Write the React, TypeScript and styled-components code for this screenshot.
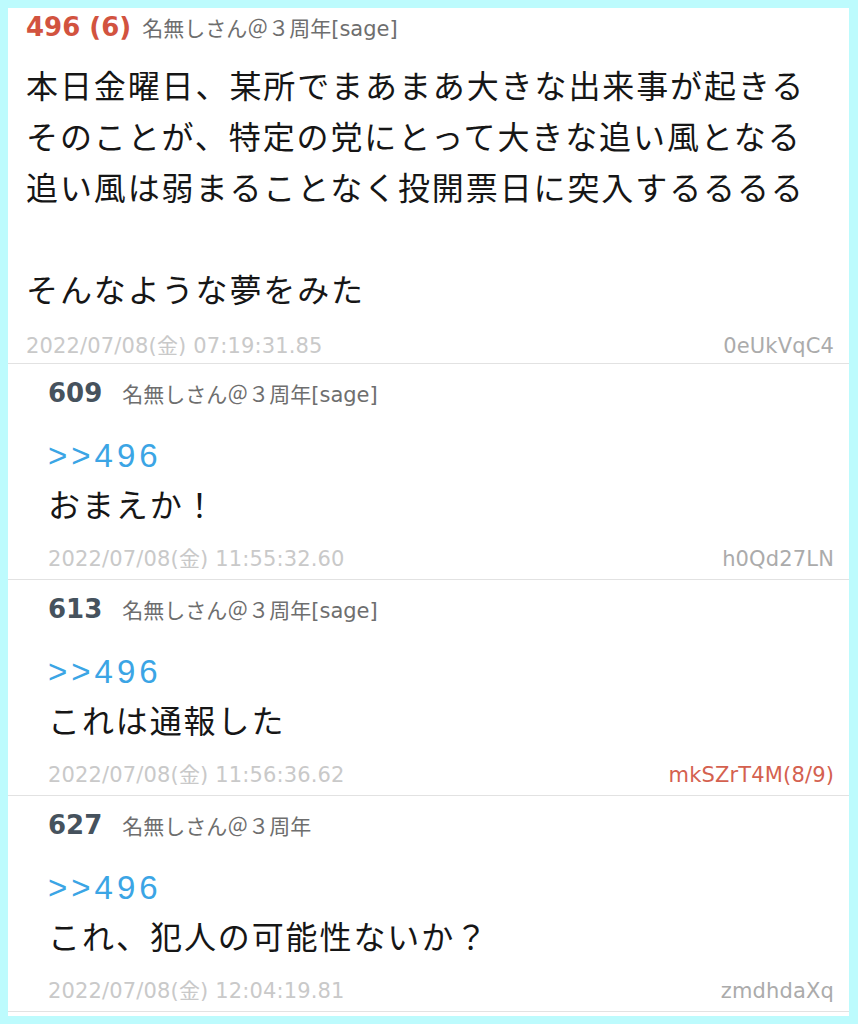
import React from "react";
import styled, { createGlobalStyle } from "styled-components";

const GlobalStyle = createGlobalStyle`
  html, body { margin: 0; padding: 0; background: #bdfbfd; }
  * { box-sizing: border-box; }
`;

const Frame = styled.div`
  width: 858px;
  padding: 8px 9px 8px 8px;
  background: #bdfbfd;
`;

const Panel = styled.div`
  background: #ffffff;
  padding-bottom: 4px;
  display: flex;
  flex-direction: column;
`;

const Post = styled.article<{ $reply?: boolean }>`
  border-bottom: 1px solid #e2e2e2;
  padding: ${(p) => (p.$reply ? "14px 15px 5px 40px" : "4px 15px 2px 18px")};
  display: flex;
  flex-direction: column;
`;

const Header = styled.div<{ $reply?: boolean }>`
  display: flex;
  align-items: baseline;
  gap: ${(p) => (p.$reply ? "20px" : "11px")};
  height: 30px;
  line-height: 30px;
`;

const Num = styled.span<{ $red?: boolean }>`
  font-family: "DejaVu Sans", "Noto Sans CJK JP", sans-serif;
  font-weight: 700;
  font-size: 26px;
  color: ${(p) => (p.$red ? "#d2533f" : "#46525d")};
`;

const Name = styled.span`
  font-family: "DejaVu Sans", "Noto Sans CJK JP", sans-serif;
  font-size: 21px;
  color: #6e6e6e;
`;

const Body = styled.div<{ $reply?: boolean }>`
  margin-top: ${(p) => (p.$reply ? "23px" : "20px")};
  font-family: "Liberation Sans", "Noto Sans CJK JP", sans-serif;
  font-size: 32px;
  letter-spacing: 1.9px;
  line-height: ${(p) => (p.$reply ? "50px" : "51px")};
  color: #161616;
`;

const Line = styled.div`
  min-height: 1em;
  white-space: nowrap;
`;

const Anchor = styled.span`
  color: #3ba5e5;
  font-size: 33px;
  letter-spacing: 4px;
`;

const Footer = styled.div<{ $reply?: boolean }>`
  margin-top: ${(p) => (p.$reply ? "13px" : "14px")};
  display: flex;
  justify-content: space-between;
  align-items: baseline;
  height: 30px;
  line-height: 30px;
  font-family: "DejaVu Sans", "Noto Sans CJK JP", sans-serif;
  font-size: 21px;
  letter-spacing: 0.15px;
`;

const DateText = styled.span`
  color: #c9c9c9;
`;

const Id = styled.span<{ $red?: boolean }>`
  color: ${(p) => (p.$red ? "#d4614f" : "#ababab")};
`;

type Reply = {
  num: string;
  name: string;
  text: string;
  date: string;
  id: string;
  redId?: boolean;
};

const replies: Reply[] = [
  {
    num: "609",
    name: "名無しさん＠３周年[sage]",
    text: "おまえか！",
    date: "2022/07/08(金) 11:55:32.60",
    id: "h0Qd27LN",
  },
  {
    num: "613",
    name: "名無しさん＠３周年[sage]",
    text: "これは通報した",
    date: "2022/07/08(金) 11:56:36.62",
    id: "mkSZrT4M(8/9)",
    redId: true,
  },
  {
    num: "627",
    name: "名無しさん＠３周年",
    text: "これ、犯人の可能性ないか？",
    date: "2022/07/08(金) 12:04:19.81",
    id: "zmdhdaXq",
  },
];

const mainLines = [
  "本日金曜日、某所でまあまあ大きな出来事が起きる",
  "そのことが、特定の党にとって大きな追い風となる",
  "追い風は弱まることなく投開票日に突入するるるる",
  "",
  "そんなような夢をみた",
];

export default function App() {
  return (
    <>
      <GlobalStyle />
      <Frame>
        <Panel>
          <Post>
            <Header>
              <Num $red>496 (6)</Num>
              <Name>名無しさん＠３周年[sage]</Name>
            </Header>
            <Body>
              {mainLines.map((l, i) => (
                <Line key={i}>{l || "\u00a0"}</Line>
              ))}
            </Body>
            <Footer>
              <DateText>2022/07/08(金) 07:19:31.85</DateText>
              <Id>0eUkVqC4</Id>
            </Footer>
          </Post>
          {replies.map((r) => (
            <Post $reply key={r.num}>
              <Header $reply>
                <Num>{r.num}</Num>
                <Name>{r.name}</Name>
              </Header>
              <Body $reply>
                <Line>
                  <Anchor>&gt;&gt;496</Anchor>
                </Line>
                <Line>{r.text}</Line>
              </Body>
              <Footer $reply>
                <DateText>{r.date}</DateText>
                <Id $red={r.redId}>{r.id}</Id>
              </Footer>
            </Post>
          ))}
        </Panel>
      </Frame>
    </>
  );
}
